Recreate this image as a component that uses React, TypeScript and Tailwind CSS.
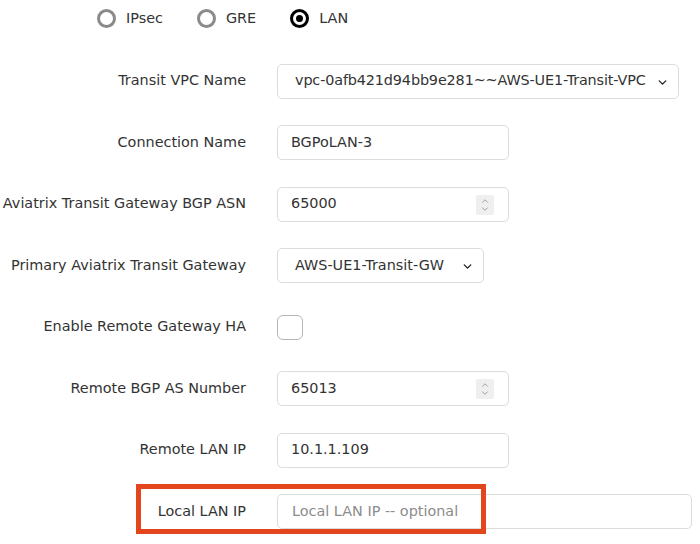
import { ChevronDown, ChevronUp } from 'lucide-react';

// Connection form rows
const rows = [
  { label: 'Transit VPC Name', kind: 'select', value: 'vpc-0afb421d94bb9e281~~AWS-UE1-Transit-VPC', width: 'w-[402px]', tight: true },
  { label: 'Connection Name', kind: 'text', value: 'BGPoLAN-3', width: 'w-[232px]' },
  { label: 'Aviatrix Transit Gateway BGP ASN', kind: 'number', value: '65000', width: 'w-[232px]' },
  { label: 'Primary Aviatrix Transit Gateway', kind: 'select', value: 'AWS-UE1-Transit-GW', width: 'w-[207px]' },
  { label: 'Enable Remote Gateway HA', kind: 'checkbox', value: '', width: '' },
  { label: 'Remote BGP AS Number', kind: 'number', value: '65013', width: 'w-[232px]' },
  { label: 'Remote LAN IP', kind: 'text', value: '10.1.1.109', width: 'w-[232px]' },
  { label: 'Local LAN IP', kind: 'placeholder', value: 'Local LAN IP -- optional', width: 'w-[415px]' },
];

const Radio = ({ label, checked }: { label: string; checked?: boolean }) => (
  <div className="flex items-center gap-[10px]">
    {checked ? (
      <span className="w-[19px] h-[19px] rounded-full border-[3px] border-black flex items-center justify-center">
        <span className="w-[7px] h-[7px] rounded-full bg-black" />
      </span>
    ) : (
      <span className="w-[19px] h-[19px] rounded-full border-[3px] border-[#8a8a8a]" />
    )}
    <span>{label}</span>
  </div>
);

const Field = ({ kind, value, width, tight }: { kind: string; value: string; width: string; tight?: boolean }) => {
  if (kind === 'checkbox') {
    return <div className="w-[26px] h-[25px] rounded-[6px] border-[1.5px] border-[#b5b5b5] bg-white" />;
  }
  return (
    <div className={`relative h-[35px] ${width} rounded-[5px] border border-[#dcdcdc] bg-white flex items-center`}>
      <span
        className={
          kind === 'select'
            ? `pl-[17px] whitespace-nowrap ${tight ? 'tracking-[-0.14px]' : ''}`
            : kind === 'placeholder'
            ? 'pl-[14px] text-[#8c8c8c] whitespace-nowrap'
            : 'pl-[13px] whitespace-nowrap'
        }
      >
        {value}
      </span>
      {kind === 'select' && (
        <ChevronDown size={13} strokeWidth={2.5} className="absolute right-[9px] top-[11px] text-[#222]" />
      )}
      {kind === 'number' && (
        <div className="absolute right-[14px] top-[7px] w-[18px] h-[20px] bg-[#efefef] rounded-[2px] flex flex-col items-center justify-center text-[#8e8e8e]">
          <ChevronUp size={10} strokeWidth={2} className="-mb-[1px]" />
          <ChevronDown size={10} strokeWidth={2} className="-mt-[1px]" />
        </div>
      )}
    </div>
  );
};

export default function App() {
  return (
    <div className="relative w-[700px] h-[544px] overflow-hidden bg-white text-[#333] text-[14.4px] font-['DejaVu_Sans',sans-serif]">
      {/* Connection type */}
      <div className="h-[38px] flex items-center gap-[34px] pl-[97px]">
        <Radio label="IPsec" />
        <Radio label="GRE" />
        <Radio label="LAN" checked />
      </div>

      {/* Form rows */}
      <div className="flex flex-col gap-[26.5px] pt-[25.5px]">
        {rows.map((row) => (
          <div key={row.label} className="grid grid-cols-[246px_1fr] gap-x-[31px] items-center h-[35px]">
            <div className="text-right whitespace-nowrap">{row.label}</div>
            <div>
              <Field kind={row.kind} value={row.value} width={row.width} tight={row.tight} />
            </div>
          </div>
        ))}
      </div>

      {/* Highlight annotation */}
      <div className="absolute left-[136px] top-[484px] w-[350px] h-[50px] border-[5px] border-[#e3461c] pointer-events-none" />
    </div>
  );
}
